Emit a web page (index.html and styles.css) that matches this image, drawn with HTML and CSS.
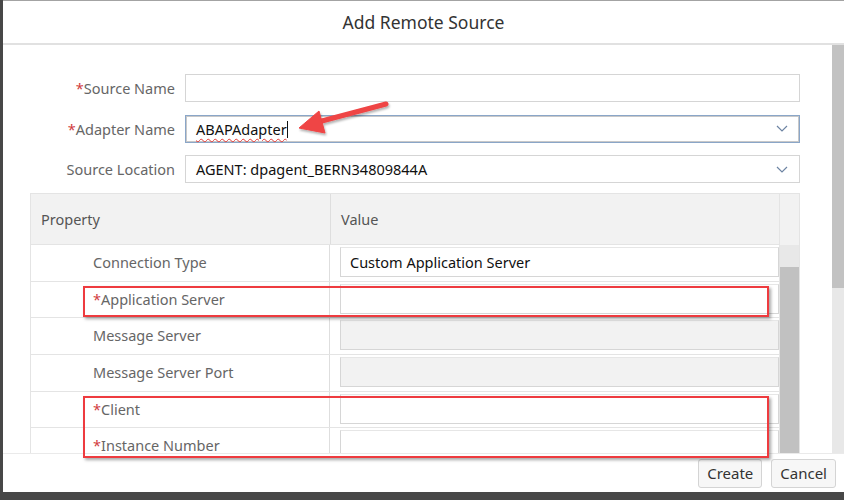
FILE: index.html
```html
<!DOCTYPE html>
<html lang="en">
<head>
    <meta charset="UTF-8">
    <title>Add Remote Source</title>
    <link rel="stylesheet" href="styles.css">
</head>
<body>
    <div class="dialog">
        <header class="dialog-header">Add Remote Source</header>
        <div class="dialog-body">
            <div class="content">
                <div class="form">
                    <div class="form-row">
                        <label class="form-label"><span class="req">*</span>Source Name</label>
                        <div class="field"></div>
                    </div>
                    <div class="form-row">
                        <label class="form-label"><span class="req">*</span>Adapter Name</label>
                        <div class="field focused">
                            <span class="field-text"><span class="misspelled">ABAPAdapter</span><span class="caret"></span></span>
                            <svg class="chevron" viewBox="0 0 12 7"><path d="M1 1l5 5 5-5" fill="none" stroke="#6d84a3" stroke-width="1.2"/></svg>
                        </div>
                    </div>
                    <div class="form-row">
                        <label class="form-label">Source Location</label>
                        <div class="field">
                            <span class="field-text">AGENT: dpagent_BERN34809844A</span>
                            <svg class="chevron" viewBox="0 0 12 7"><path d="M1 1l5 5 5-5" fill="none" stroke="#6d84a3" stroke-width="1.2"/></svg>
                        </div>
                    </div>
                </div>

                <div class="props">
                    <div class="props-main">
                        <div class="props-head">
                            <div class="cell-prop">Property</div>
                            <div class="cell-val">Value</div>
                        </div>
                        <div class="props-row">
                            <div class="cell-prop">Connection Type</div>
                            <div class="cell-val"><div class="input"><span class="field-text">Custom Application Server</span></div></div>
                        </div>
                        <div class="props-row">
                            <div class="cell-prop"><span class="req">*</span>Application Server</div>
                            <div class="cell-val"><div class="input"></div></div>
                        </div>
                        <div class="props-row">
                            <div class="cell-prop">Message Server</div>
                            <div class="cell-val"><div class="input disabled"></div></div>
                        </div>
                        <div class="props-row">
                            <div class="cell-prop">Message Server Port</div>
                            <div class="cell-val"><div class="input disabled"></div></div>
                        </div>
                        <div class="props-row">
                            <div class="cell-prop"><span class="req">*</span>Client</div>
                            <div class="cell-val"><div class="input"></div></div>
                        </div>
                        <div class="props-row">
                            <div class="cell-prop"><span class="req">*</span>Instance Number</div>
                            <div class="cell-val"><div class="input"></div></div>
                        </div>
                    </div>
                    <div class="props-scroll">
                        <div class="props-scroll-head"></div>
                        <div class="props-scroll-track"></div>
                        <div class="props-scroll-thumb"></div>
                    </div>
                </div>
            </div>
            <div class="outer-scroll"><div class="outer-thumb"></div></div>
        </div>
        <footer class="dialog-footer">
            <button class="btn">Create</button>
            <button class="btn">Cancel</button>
        </footer>
    </div>

    <!-- screenshot annotations -->
    <div class="mark mark-app"></div>
    <div class="mark mark-client"></div>
    <svg class="arrow" viewBox="0 0 844 500">
        <defs>
            <filter id="shadow" x="-20%" y="-20%" width="140%" height="160%">
                <feDropShadow dx="1" dy="2" stdDeviation="1.2" flood-color="#000" flood-opacity="0.3"/>
            </filter>
        </defs>
        <g filter="url(#shadow)" fill="#ef4444" stroke="#ef4444">
            <line x1="386" y1="104" x2="318" y2="122" stroke-width="5" stroke-linecap="round"/>
            <polygon points="299,128 319,111 325,133" stroke-width="1" stroke-linejoin="round"/>
        </g>
    </svg>
</body>
</html>
```

FILE: styles.css
```css
body {
    margin: 0;
    background-color: #474747;
    font-family: "Noto Sans", "Open Sans", sans-serif;
    font-size: 14.5px;
    color: #333;
}
.dialog {
    margin-left: 3px;
    width: 841px;
    height: 491px;
    background: white;
    border-top: 1px solid #a3a3a3;
    display: flex;
    flex-direction: column;
}
.dialog-header {
    height: 42px;
    border-bottom: 2px solid #e1e1e1;
    display: flex;
    align-items: center;
    justify-content: center;
    font-size: 17.5px;
    color: #333;
}
.dialog-body {
    height: 408px;
    display: flex;
    overflow: hidden;
}
.content {
    flex: 1;
    padding: 29px 32px 0 0;
}
.form-row {
    display: flex;
    align-items: center;
    gap: 10px;
    height: 28px;
    margin-bottom: 12.5px;
}
.form-row:last-child {
    margin-bottom: 0;
}
.form-label {
    width: 172px;
    text-align: right;
    color: #666;
}
.req {
    color: #d13b40;
}
.field {
    flex: 1;
    height: 26px;
    border: 1px solid #d5d5d5;
    display: flex;
    align-items: center;
    justify-content: space-between;
    padding: 0 10px;
}
.field.focused {
    border-color: #8aa6c8;
    box-shadow: inset 0 0 0 1px #c8c8c8;
}
.field-text {
    color: #111;
    white-space: nowrap;
}
.misspelled {
    text-decoration: underline wavy #e53935;
    text-decoration-thickness: 1px;
    text-underline-offset: 3px;
}
.caret {
    display: inline-block;
    width: 1px;
    height: 17px;
    background: #111;
    vertical-align: -3px;
}
.chevron {
    width: 12px;
    height: 7px;
    margin-right: 1px;
}
.props {
    margin: 10px 0 0 27px;
    display: flex;
    border: 1px solid #e4e4e4;
    border-bottom: none;
}
.props-main {
    flex: 1;
}
.props-head {
    height: 50px;
    display: flex;
    align-items: center;
    background: #f2f2f2;
    border-bottom: 1px solid #e4e4e4;
}
.props-head .cell-prop,
.props-head .cell-val {
    height: 100%;
    display: flex;
    align-items: center;
}
.props-head .cell-prop {
    padding-left: 10px;
}
.props-row {
    box-sizing: border-box;
    height: 36.7px;
    display: flex;
    border-bottom: 1px solid #e4e4e4;
}
.cell-prop {
    width: 299px;
    border-right: 1px solid #dedede;
    display: flex;
    align-items: center;
    padding-left: 62px;
    padding-bottom: 2px;
    color: #666;
    box-sizing: border-box;
    flex-shrink: 0;
}
.props-head .cell-prop {
    width: 300px;
    color: #555;
    padding-bottom: 0;
}
.cell-val {
    flex: 1;
    padding: 2px 0 0 10px;
    color: #555;
}
.props-head .cell-val {
    padding: 0 0 0 10px;
}
.input {
    height: 28px;
    border: 1px solid #d6d6d6;
    border-top-color: #e6e6e6;
    background: white;
    display: flex;
    align-items: center;
    padding-left: 9px;
}
.input.disabled {
    background: #f2f2f2;
}
.props-scroll {
    width: 19px;
    border-left: 1px solid #e4e4e4;
    display: flex;
    flex-direction: column;
}
.props-scroll-head {
    height: 51px;
    background: #f2f2f2;
}
.props-scroll-track {
    height: 22px;
    background: #e8e8e8;
}
.props-scroll-thumb {
    flex: 1;
    background: #c1c1c1;
}
.outer-scroll {
    width: 12px;
    background: #e8e8e8;
}
.outer-thumb {
    height: 243px;
    background: #c2c2c2;
}
.dialog-footer {
    flex: 1;
    border-top: 1px solid #eaeaea;
    display: flex;
    align-items: center;
    justify-content: flex-end;
    gap: 9px;
    padding-right: 8px;
}
.btn {
    height: 29px;
    padding: 0 8px;
    font-family: inherit;
    font-size: 15px;
    color: #333;
    background: #f7f7f7;
    border: 1px solid #d4d4d4;
    border-radius: 3px;
}
.mark {
    position: absolute;
    left: 83px;
    width: 682px;
    border: 2px solid #ee3b3f;
    box-shadow: 2px 2px 3px rgba(0, 0, 0, 0.35);
}
.mark-app {
    top: 286px;
    height: 27px;
}
.mark-client {
    top: 396px;
    height: 58px;
}
.arrow {
    position: absolute;
    left: 0;
    top: 0;
    width: 844px;
    height: 500px;
    pointer-events: none;
}
```
